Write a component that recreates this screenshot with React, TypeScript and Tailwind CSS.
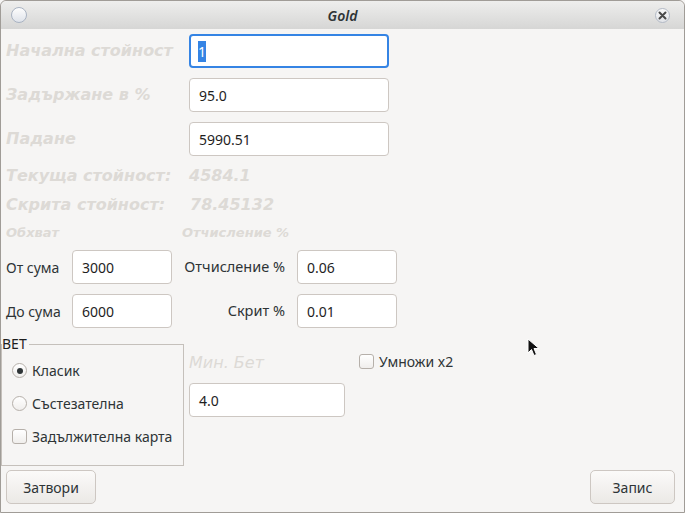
import React from 'react'

const BASE = { fontFamily: '"Noto Sans", "DejaVu Sans", sans-serif' }
const DIM = { fontFamily: '"DejaVu Sans", "Noto Sans", sans-serif' }

function Field({ value, className = '' }: { value: string; className?: string }) {
  return (
    <div
      className={`flex h-[34px] items-center rounded-[4px] border border-[#cdc7c2] bg-white pl-[9px] text-[14px] text-[#1e1e1e] ${className}`}
    >
      {value}
    </div>
  )
}

function DimLabel({ children, className = '' }: { children: React.ReactNode; className?: string }) {
  return (
    <span style={DIM} className={`font-bold italic text-[#dddad6] ${className}`}>
      {children}
    </span>
  )
}

function Radio({ checked, label }: { checked?: boolean; label: string }) {
  return (
    <div className="flex items-center gap-[5px]">
      <span className="flex h-[15px] w-[15px] items-center justify-center rounded-full border border-[#b6b0aa] bg-gradient-to-b from-white to-[#f0eeec]">
        {checked && <span className="h-[6px] w-[6px] rounded-full bg-[#2e3436]" />}
      </span>
      <span>{label}</span>
    </div>
  )
}

function Check({ label }: { label: string }) {
  return (
    <div className="flex items-center gap-[5px]">
      <span className="h-[15px] w-[15px] rounded-[3px] border border-[#b6b0aa] bg-gradient-to-b from-white to-[#f0eeec]" />
      <span>{label}</span>
    </div>
  )
}

function Button({ children, className = '' }: { children: React.ReactNode; className?: string }) {
  return (
    <button
      className={`flex h-[34px] items-center justify-center rounded-[5px] border border-[#cdc7c2] bg-gradient-to-b from-[#fbfaf9] to-[#ebe9e6] text-[14px] text-[#2e3436] ${className}`}
    >
      {children}
    </button>
  )
}

export default function App() {
  return (
    <div style={BASE} className="relative h-[513px] w-[685px] overflow-hidden bg-[#f6f5f4] text-[14px] text-[#2e3436]">
      <div className="flex h-[513px] flex-col rounded-t-[6px] border border-[#a09c97]">
        {/* title bar */}
        <div className="relative flex h-[28px] shrink-0 items-center justify-center rounded-t-[6px] bg-gradient-to-b from-[#eeeeed] to-[#d6d6d5]">
          <span className="absolute left-[10px] top-[6px] h-[16px] w-[16px] rounded-full border border-[#a9b3c2] bg-gradient-to-b from-[#fdfdfd] to-[#dfe3ea]" />
          <span className="text-[14px] font-semibold italic text-[#2e3436]">Gold</span>
          <span className="absolute right-[14px] top-[7px] flex h-[15px] w-[15px] items-center justify-center rounded-full border border-[#b3bac6] bg-gradient-to-b from-[#fafafa] to-[#e2e4e8]">
            <svg width="9" height="9" viewBox="0 0 9 9">
              <path d="M1.5 1.5 L7.5 7.5 M7.5 1.5 L1.5 7.5" stroke="#4a4a4a" strokeWidth="2" strokeLinecap="round" />
            </svg>
          </span>
        </div>

        {/* body */}
        <div className="flex flex-1 flex-col pl-[5px] pt-[5px]">
          <div className="flex flex-col gap-[10px]">
            <div className="flex items-center">
              <DimLabel className="w-[183px] text-[16px]">Начална стойност</DimLabel>
              <div className="flex h-[34px] w-[200px] items-center rounded-[4px] border-2 border-[#3584e4] bg-white pl-[7px] text-[14px]">
                <span className="bg-[#3584e4] text-white">1</span>
              </div>
            </div>
            <div className="flex items-center">
              <DimLabel className="w-[183px] text-[16px]">Задържане в %</DimLabel>
              <Field value="95.0" className="w-[200px]" />
            </div>
            <div className="flex items-center">
              <DimLabel className="w-[183px] text-[16px]">Падане</DimLabel>
              <Field value="5990.51" className="w-[200px]" />
            </div>
          </div>

          <div className="mt-[9px] flex h-[22px] items-center">
            <DimLabel className="w-[183px] text-[16px]">Текуща стойност:</DimLabel>
            <DimLabel className="text-[16px]">4584.1</DimLabel>
          </div>
          <div className="mt-[7px] flex h-[22px] items-center">
            <DimLabel className="w-[184px] text-[16px]">Скрита стойност:</DimLabel>
            <DimLabel className="text-[16px]">78.45132</DimLabel>
          </div>
          <div className="mt-[8px] flex h-[18px] items-center">
            <DimLabel className="w-[176px] text-[13px]">Обхват</DimLabel>
            <DimLabel className="text-[13px]">Отчисление %</DimLabel>
          </div>

          <div className="mt-[8px] flex flex-col gap-[10px]">
            <div className="flex items-center">
              <span className="w-[66px]">От сума</span>
              <Field value="3000" className="w-[100px]" />
              <span className="w-[125px] pr-[12px] text-right text-[14.5px]">Отчисление %</span>
              <Field value="0.06" className="w-[100px]" />
            </div>
            <div className="flex items-center">
              <span className="w-[66px]">До сума</span>
              <Field value="6000" className="w-[100px]" />
              <span className="w-[125px] pr-[12px] text-right text-[14.5px]">Скрит %</span>
              <Field value="0.01" className="w-[100px]" />
            </div>
          </div>

          <div className="mt-[8px] flex">
            <div className="relative -ml-[5px] mt-[8px] h-[122px] w-[183px] border border-[#c5c0bb]">
              <span className="absolute -top-[10px] left-0 bg-[#f6f5f4] pr-[2px] leading-[18px] text-[#1e1e1e]">BET</span>
              <div className="flex flex-col gap-[12px] pl-[10px] pt-[15px]">
                <Radio checked label="Класик" />
                <Radio label="Състезателна" />
                <Check label="Задължителна карта" />
              </div>
            </div>
            <div className="ml-[5px] flex flex-col pt-[17px]">
              <span style={DIM} className="text-[16px] italic leading-[20px] text-[#dddad6]">
                Мин. Бет
              </span>
              <Field value="4.0" className="mt-[10px] w-[156px]" />
            </div>
            <div className="ml-[14px] pt-[15px]">
              <Check label="Умножи x2" />
            </div>
          </div>

          <div className="mt-[4px] flex justify-between pr-[9px]">
            <Button className="w-[90px]">Затвори</Button>
            <Button className="w-[85px]">Запис</Button>
          </div>
        </div>
      </div>

      {/* mouse pointer */}
      <svg className="absolute left-[527px] top-[338px]" width="14" height="20" viewBox="0 0 14 20">
        <path d="M1 1 L1 15 L4.5 11.5 L7 17.5 L9.5 16.5 L7 10.5 L12 10.5 Z" fill="#111" stroke="#fff" strokeWidth="1" />
      </svg>
    </div>
  )
}
